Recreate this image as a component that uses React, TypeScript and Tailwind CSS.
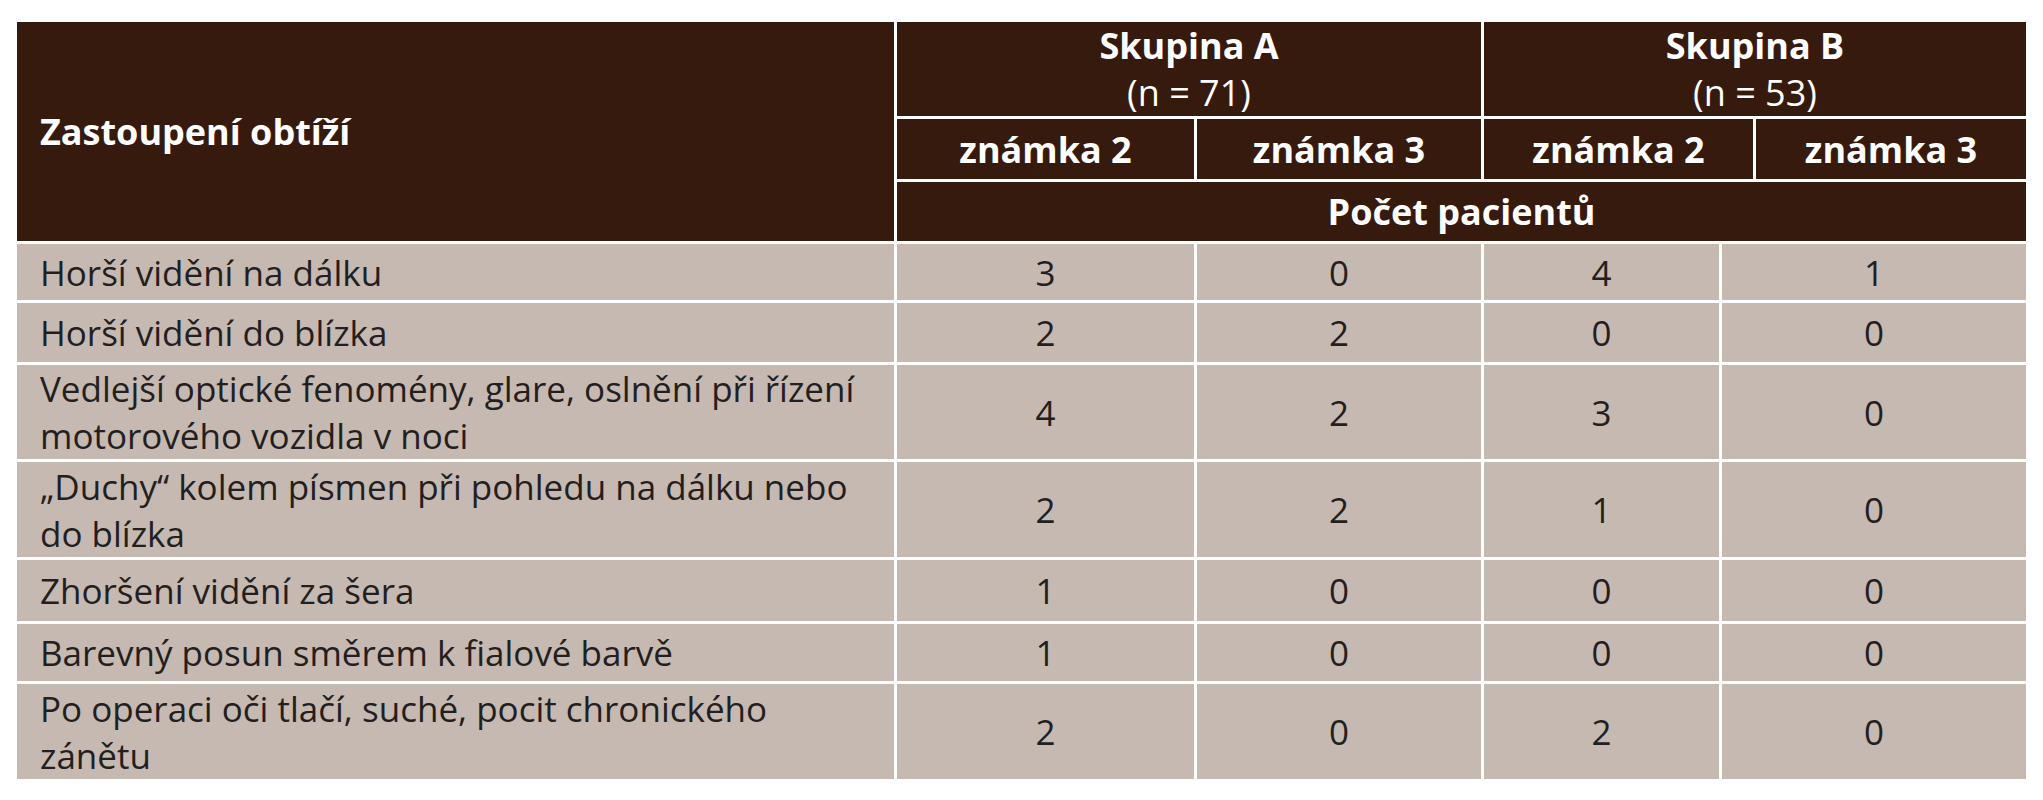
import React from "react";

type Row = { lines: string[]; vals: string[]; h: string };

const rows: Row[] = [
  { lines: ["Horší vidění na dálku"], vals: ["3", "0", "4", "1"], h: "h-[56px]" },
  { lines: ["Horší vidění do blízka"], vals: ["2", "2", "0", "0"], h: "h-[59px]" },
  {
    lines: ["Vedlejší optické fenomény, glare, oslnění při řízení", "motorového vozidla v noci"],
    vals: ["4", "2", "3", "0"],
    h: "h-[94px]",
  },
  {
    lines: ["„Duchy“ kolem písmen při pohledu na dálku nebo", "do blízka"],
    vals: ["2", "2", "1", "0"],
    h: "h-[95px]",
  },
  { lines: ["Zhoršení vidění za šera"], vals: ["1", "0", "0", "0"], h: "h-[61px]" },
  { lines: ["Barevný posun směrem k fialové barvě"], vals: ["1", "0", "0", "0"], h: "h-[57px]" },
  {
    lines: ["Po operaci oči tlačí, suché, pocit chronického", "zánětu"],
    vals: ["2", "0", "2", "0"],
    h: "h-[95px]",
  },
];

const head = "bg-[#361a0d] text-white flex items-center justify-center";
const body = "bg-[#c5b9b2] text-[#231f20] flex items-center justify-center";

export default function App() {
  return (
    <div className="w-[2043px] h-[800px] bg-white pt-[22px] pl-[17px] font-['Open_Sans',sans-serif]">
      <div className="w-[2009px] flex flex-col gap-[3px] bg-white">
        {/* Header */}
        <div className="flex gap-[3px] h-[219px]">
          <div className={`${head} w-[877px] !justify-start pl-[23px] text-[36px] font-bold leading-[47px]`}>
            Zastoupení obtíží
          </div>
          <div className="flex-1 flex flex-col gap-[3px]">
            <div className="flex gap-[3px] h-[94px]">
              <div className={`${head} w-[584px] flex-col text-[36px] leading-[47px]`}>
                <span className="font-bold">Skupina A</span>
                <span>(n = 71)</span>
              </div>
              <div className={`${head} flex-1 flex-col text-[36px] leading-[47px]`}>
                <span className="font-bold">Skupina B</span>
                <span>(n = 53)</span>
              </div>
            </div>
            <div className="flex gap-[3px] h-[60px] text-[36px] font-bold leading-[47px]">
              <div className={`${head} w-[297px]`}>známka 2</div>
              <div className={`${head} w-[284px]`}>známka 3</div>
              <div className={`${head} w-[269px]`}>známka 2</div>
              <div className={`${head} flex-1`}>známka 3</div>
            </div>
            <div className={`${head} h-[59px] text-[36px] font-bold leading-[47px]`}>Počet pacientů</div>
          </div>
        </div>
        {/* Body */}
        {rows.map((r, i) => (
          <div key={i} className={`flex gap-[3px] ${r.h} text-[35px] leading-[47px]`}>
            <div className={`${body} w-[877px] !justify-start pl-[23px]`}>
              <div className="flex flex-col whitespace-nowrap">
                {r.lines.map((l, j) => (
                  <span key={j}>{l}</span>
                ))}
              </div>
            </div>
            <div className={`${body} w-[297px]`}>{r.vals[0]}</div>
            <div className={`${body} w-[284px]`}>{r.vals[1]}</div>
            <div className={`${body} w-[235px]`}>{r.vals[2]}</div>
            <div className={`${body} flex-1`}>{r.vals[3]}</div>
          </div>
        ))}
      </div>
    </div>
  );
}
